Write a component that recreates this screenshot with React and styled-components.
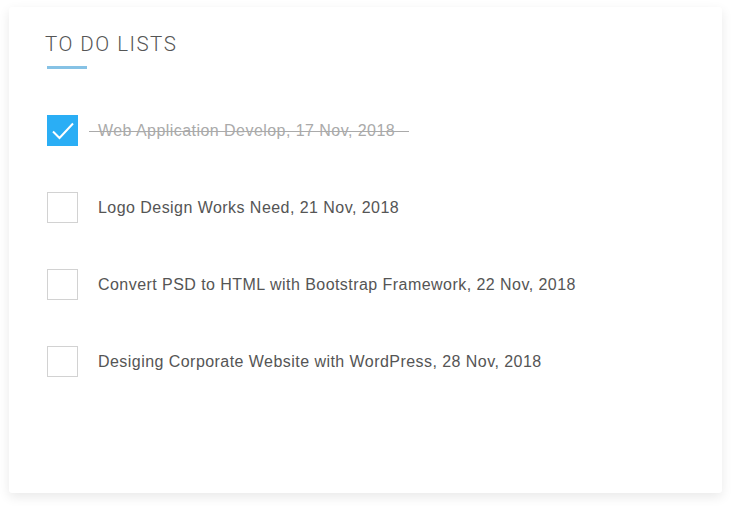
import { createGlobalStyle, styled } from "styled-components";

const GlobalStyle = createGlobalStyle`
  html, body {
    margin: 0;
    background: #ffffff;
    font-family: "Liberation Sans", Arial, sans-serif;
  }
  body {
    padding: 7px 9px 13px 9px;
  }
`;

const Card = styled.div`
  box-sizing: border-box;
  width: 713px;
  height: 486px;
  background: #ffffff;
  border-radius: 3px;
  box-shadow: 0 4px 12px rgba(0, 0, 0, 0.09);
  padding: 25px 38px 0 36px;
`;

const Title = styled.h2`
  margin: 0;
  font-family: Roboto, "Liberation Sans", sans-serif;
  font-weight: 300;
  font-size: 20.5px;
  line-height: 24px;
  letter-spacing: 1.5px;
  color: #555555;
`;

const Underline = styled.div`
  width: 40px;
  height: 3px;
  margin: 10px 0 0 2px;
  background: #86c2e5;
`;

const List = styled.ul`
  list-style: none;
  margin: 46px 0 0 2px;
  padding: 0;
  display: flex;
  flex-direction: column;
  gap: 46px;
`;

const Item = styled.li`
  display: flex;
  align-items: center;
  gap: 20px;
  height: 31px;
`;

const Box = styled.span`
  box-sizing: border-box;
  flex: none;
  width: 31px;
  height: 31px;
  border: 1px solid ${(p) => (p.$checked ? "#2aaef5" : "#d2d2d2")};
  background: ${(p) => (p.$checked ? "#2aaef5" : "#ffffff")};
  display: flex;
  align-items: center;
  justify-content: center;
`;

const Label = styled.span`
  position: relative;
  font-size: 16px;
  letter-spacing: 0.45px;
  color: ${(p) => (p.$checked ? "#aaaaaa" : "#555555")};

  ${(p) =>
    p.$checked &&
    `
    &::after {
      content: "";
      position: absolute;
      left: -9px;
      right: -14px;
      top: 50%;
      height: 1px;
      background: #aaaaaa;
    }
  `}
`;

const todos = [
  { text: "Web Application Develop, 17 Nov, 2018", done: true },
  { text: "Logo Design Works Need, 21 Nov, 2018", done: false },
  { text: "Convert PSD to HTML with Bootstrap Framework, 22 Nov, 2018", done: false },
  { text: "Desiging Corporate Website with WordPress, 28 Nov, 2018", done: false },
];

function Check() {
  return (
    <svg width="24" height="20" viewBox="0 0 24 20" fill="none">
      <path d="M2 10.5 L8.5 17 L22 2.5" stroke="#ffffff" strokeWidth="2" />
    </svg>
  );
}

export default function App() {
  return (
    <>
      <GlobalStyle />
      <Card>
        <Title>TO DO LISTS</Title>
        <Underline />
        <List>
          {todos.map((todo) => (
            <Item key={todo.text}>
              <Box $checked={todo.done}>{todo.done && <Check />}</Box>
              <Label $checked={todo.done}>{todo.text}</Label>
            </Item>
          ))}
        </List>
      </Card>
    </>
  );
}
